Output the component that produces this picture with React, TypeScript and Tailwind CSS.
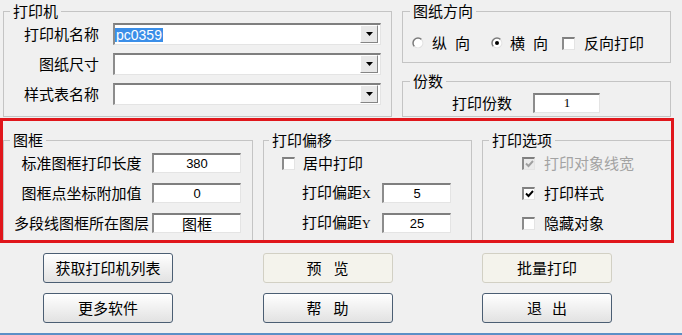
import React from "react";

const inset =
  "border-t-2 border-l-2 border-b border-r border-t-[#7f7f7f] border-l-[#8c8c8c] border-b-[#e4e4e4] border-r-[#e4e4e4]";

const Field = ({ value, w, serif }: { value: string; w: string; serif?: boolean }) => (
  <div
    className={`flex h-[20px] ${w} items-center justify-center bg-white ${inset} ${
      serif ? "font-['Liberation_Serif',serif] text-[13px]" : "font-['Liberation_Sans',sans-serif] text-[13px]"
    }`}
  >
    {value}
  </div>
);

const Combo = ({ children }: { children?: React.ReactNode }) => (
  <div className={`flex h-[22px] w-[268px] items-start bg-white pr-[2px] ${inset}`}>
    <div className="flex h-full flex-1 items-center">{children}</div>
    <span className="flex h-[18px] w-[18px] items-center justify-center border border-t-white border-l-white border-b-[#858585] border-r-[#858585] bg-[#e8e8e8]">
      <svg width="7" height="4" viewBox="0 0 7 4">
        <path d="M0 0H7L3.5 4Z" fill="#000" />
      </svg>
    </span>
  </div>
);

const Check = ({ checked = false, disabled = false }: { checked?: boolean; disabled?: boolean }) => (
  <span
    className={`flex h-[13px] w-[13px] shrink-0 items-center justify-center ${inset} ${
      disabled ? "bg-[#ebebeb]" : "bg-white"
    }`}
  >
    {checked && (
      <svg width="9" height="8" viewBox="0 0 9 8">
        <path d="M1 3.5L3.5 6L8 1" stroke={disabled ? "#a0a0a0" : "#000"} strokeWidth="1.9" fill="none" />
      </svg>
    )}
  </span>
);

const Radio = ({ checked = false }: { checked?: boolean }) => (
  <svg width="12" height="12" viewBox="0 0 12 12" className="shrink-0">
    <circle cx="6" cy="6" r="5.5" fill="#fff" />
    <path d="M2.46 9.54A5 5 0 0 1 9.54 2.46" stroke="#7a7a7a" strokeWidth="1.5" fill="none" />
    <path d="M9.54 2.46A5 5 0 0 1 2.46 9.54" stroke="#e2e2e2" strokeWidth="1.2" fill="none" />
    {checked && <circle cx="6" cy="6" r="2" fill="#000" />}
  </svg>
);

const Legend = ({ text, ml = "ml-[6px]" }: { text: string; ml?: string }) => (
  <legend className={`${ml} px-[3px] leading-[20px]`}>{text}</legend>
);

const Btn = ({ children, disabled }: { children: React.ReactNode; disabled?: boolean }) => (
  <div
    className={`flex h-[30px] items-center justify-center rounded-[3px] border text-[15px] ${
      disabled
        ? "border-[#d2d0c4] bg-[#f4f3ec]"
        : "border-[#4b5e73] bg-linear-to-b from-white to-[#e2e2e2]"
    }`}
  >
    {children}
  </div>
);

export default function App() {
  return (
    <div className="relative flex h-[335px] w-[682px] flex-col overflow-hidden bg-[#f0f0f0] text-[15px] leading-[20px] text-black font-['Noto_Sans_CJK_SC','Noto_Sans',sans-serif]">
      <div className="flex pt-[1px]">
        <fieldset className="ml-[3px] h-[116px] w-[389px] border border-[#c4c4c4]">
          <Legend text="打印机" />
          <div className="flex flex-col gap-[8px] pt-[2px]">
            <div className="flex h-[22px] items-center">
              <span className="w-[95px] text-right">打印机名称</span>
              <div className="ml-[14px]">
                <Combo>
                  <span className="bg-[#3a8ee8] px-[1px] font-['Liberation_Sans',sans-serif] text-[14px] leading-[14px] text-white">
                    pc0359
                  </span>
                </Combo>
              </div>
            </div>
            <div className="flex h-[22px] items-center">
              <span className="w-[95px] text-right">图纸尺寸</span>
              <div className="ml-[14px]">
                <Combo />
              </div>
            </div>
            <div className="flex h-[22px] items-center">
              <span className="w-[95px] text-right">样式表名称</span>
              <div className="ml-[14px]">
                <Combo />
              </div>
            </div>
          </div>
        </fieldset>

        <div className="ml-[10px] flex w-[269px] flex-col">
          <fieldset className="h-[62px] border border-[#c4c4c4]">
            <Legend text="图纸方向" ml="ml-[7px]" />
            <div className="mt-[12px] flex h-[20px] items-center pl-[9px]">
              <Radio />
              <span className="ml-[8px]">纵</span>
              <span className="ml-[8px]">向</span>
              <span className="ml-[21px] flex">
                <Radio checked />
              </span>
              <span className="ml-[7px]">横</span>
              <span className="ml-[8px]">向</span>
              <span className="ml-[14px] flex">
                <Check />
              </span>
              <span className="ml-[9px]">反向打印</span>
            </div>
          </fieldset>
          <fieldset className="mt-[8px] h-[46px] border border-[#c4c4c4]">
            <Legend text="份数" ml="ml-[7px]" />
            <div className="mt-[2px] flex h-[19px] items-center pl-[49px]">
              <span>打印份数</span>
              <div className="ml-[21px]">
                <Field value="1" w="w-[67px]" serif />
              </div>
            </div>
          </fieldset>
        </div>
      </div>

      <div className="mt-[13px] flex">
        <fieldset className="ml-[3px] h-[111px] w-[250px] border border-[#c4c4c4]">
          <Legend text="图框" />
          <div className="flex flex-col gap-[10px] pt-[3px]">
            {[
              ["标准图框打印长度", "380"],
              ["图框点坐标附加值", "0"],
              ["多段线图框所在图层", "图框"],
            ].map(([label, v]) => (
              <div key={label} className="flex h-[20px] items-center">
                <span className="ml-[8px] w-[139px] whitespace-nowrap text-center">{label}</span>
                <div className="ml-[1px]">
                  {v === "图框" ? (
                    <div className={`flex h-[20px] w-[89px] items-center justify-center bg-white text-[15px] ${inset}`}>
                      图框
                    </div>
                  ) : (
                    <Field value={v} w="w-[89px]" />
                  )}
                </div>
              </div>
            ))}
          </div>
        </fieldset>

        <fieldset className="ml-[10px] h-[111px] w-[209px] border border-[#c4c4c4]">
          <Legend text="打印偏移" ml="ml-[5px]" />
          <div className="flex flex-col gap-[10px] pt-[3px]">
            <div className="flex h-[20px] items-center pl-[18px]">
              <Check />
              <span className="ml-[8px]">居中打印</span>
            </div>
            {[
              ["X", "5"],
              ["Y", "25"],
            ].map(([axis, v]) => (
              <div key={axis} className="flex h-[20px] items-center pl-[38px]">
                <span className="w-[80px] whitespace-nowrap">
                  打印偏距<span className="font-['Liberation_Serif',serif] text-[12px]">{axis}</span>
                </span>
                <Field value={v} w="w-[69px]" />
              </div>
            ))}
          </div>
        </fieldset>

        <fieldset className="ml-[10px] h-[111px] w-[190px] border border-[#c4c4c4]">
          <Legend text="打印选项" />
          <div className="flex flex-col gap-[10px] pt-[3px]">
            <div className="flex h-[20px] items-center pl-[39px]">
              <Check checked disabled />
              <span className="ml-[9px] text-[#a3a3a3]">打印对象线宽</span>
            </div>
            <div className="flex h-[20px] items-center pl-[39px]">
              <Check checked />
              <span className="ml-[9px]">打印样式</span>
            </div>
            <div className="flex h-[20px] items-center pl-[39px]">
              <Check />
              <span className="ml-[9px]">隐藏对象</span>
            </div>
          </div>
        </fieldset>
      </div>

      <div className="mt-[12px] grid grid-cols-[130px_130px_130px] gap-x-[89.5px] gap-y-[10px] pl-[43px]">
        <Btn>获取打印机列表</Btn>
        <Btn disabled>
          <span>预</span>
          <span className="ml-[12px]">览</span>
        </Btn>
        <Btn disabled>批量打印</Btn>
        <Btn>更多软件</Btn>
        <Btn>
          <span>帮</span>
          <span className="ml-[12px]">助</span>
        </Btn>
        <Btn>
          <span>退</span>
          <span className="ml-[10px]">出</span>
        </Btn>
      </div>

      <div className="flex-1" />
      <div className="h-[2px] bg-[#5b8fc6]" />

      <div className="pointer-events-none absolute left-0 top-[118px] h-[125px] w-[674px] border-[3px] border-[#e0161b]" />
    </div>
  );
}
